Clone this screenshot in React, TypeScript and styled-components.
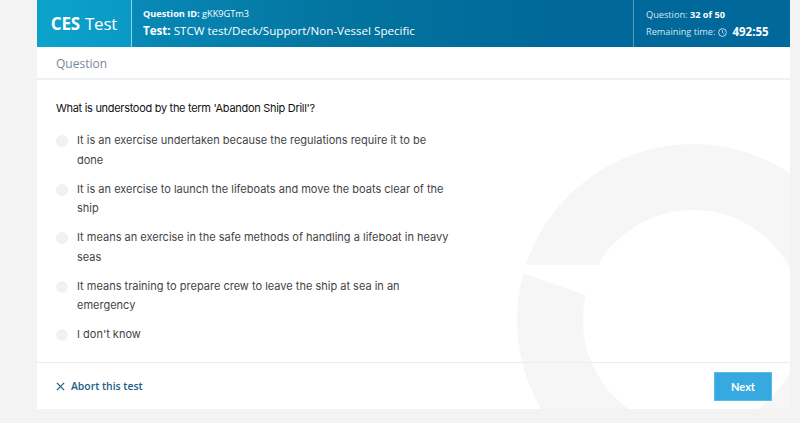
import styled, { createGlobalStyle } from "styled-components";

const Global = createGlobalStyle`
  html, body {
    margin: 0;
    padding: 0;
    background: #f3f3f3;
  }
  * { box-sizing: border-box; }
`;

const Page = styled.div`
  width: 800px;
  height: 423px;
  padding: 0 10px 14px 37px;
  background: #f3f3f3;
`;

const Card = styled.div`
  position: relative;
  overflow: hidden;
  height: 409px;
  background: #fff;
  display: flex;
  flex-direction: column;
`;

const Header = styled.header`
  position: relative;
  z-index: 1;
  display: flex;
  height: 47px;
  color: #fff;
  font-family: "Open Sans", "DejaVu Sans", sans-serif;
  background: linear-gradient(90deg, #0a93c2 0%, #03749f 40%, #00689a 70%, #00689a 100%);
`;

const Brand = styled.div`
  width: 95px;
  display: flex;
  align-items: center;
  justify-content: center;
  font-size: 17px;
  letter-spacing: -0.2px;
  background: linear-gradient(90deg, #0ba3cb, #0a99c5);
  border-right: 1px solid rgba(255, 255, 255, 0.55);
  b { font-weight: 700; margin-right: 5px; }
`;

const Info = styled.div`
  flex: 1;
  padding: 8px 0 0 11px;
  display: flex;
  flex-direction: column;
  gap: 3px;
`;

const Small = styled.div`
  font-size: 9.2px;
  line-height: 12px;
  b { font-weight: 700; }
`;

const Medium = styled.div`
  font-size: 11.6px;
  line-height: 16px;
  b { font-weight: 700; }
`;

const Status = styled.div`
  width: 157px;
  padding: 8px 0 0 12px;
  border-left: 1px solid rgba(255, 255, 255, 0.35);
  display: flex;
  flex-direction: column;
  gap: 3px;
  font-size: 9.2px;
  color: #d6e6f0;
  b { color: #fff; font-weight: 700; }
`;

const TimeRow = styled.div`
  display: flex;
  align-items: center;
  gap: 3px;
  line-height: 16px;
  strong {
    color: #fff;
    font-size: 11.5px;
    font-weight: 700;
    margin-left: 2px;
  }
`;

const Tab = styled.div`
  position: relative;
  z-index: 1;
  height: 33px;
  padding: 8px 0 0 19px;
  font-family: "Open Sans", "DejaVu Sans", sans-serif;
  font-size: 12px;
  color: #7b8998;
  border-bottom: 2px solid #eef1f4;
`;

const Body = styled.div`
  position: relative;
  z-index: 1;
  flex: 1;
  padding: 19px 0 0 19px;
  font-family: Inter, "Noto Sans", sans-serif;
`;

const QuestionText = styled.p`
  margin: 0 0 14px;
  font-size: 11px;
  font-weight: 400;
  letter-spacing: -0.3px;
  line-height: 18px;
  color: #111;
`;

const Options = styled.div`
  display: flex;
  flex-direction: column;
  gap: 9.5px;
`;

const Option = styled.label`
  display: flex;
  align-items: flex-start;
  gap: 9px;
  width: 394px;
  font-size: 11px;
  line-height: 19.5px;
  color: #444;
`;

const Radio = styled.span`
  flex: none;
  width: 12px;
  height: 12px;
  margin-top: 4px;
  border-radius: 50%;
  background: #eef1f5;
`;

const Footer = styled.footer`
  position: relative;
  z-index: 1;
  height: 47px;
  border-top: 1px solid #e8eef3;
  display: flex;
  align-items: center;
  justify-content: space-between;
  padding: 0 18px 0 19px;
`;

const Abort = styled.a`
  display: flex;
  align-items: center;
  gap: 6px;
  font-family: "Open Sans", "DejaVu Sans", sans-serif;
  font-size: 10.4px;
  font-weight: 600;
  color: #1b5d86;
`;

const NextButton = styled.button`
  width: 58px;
  height: 29px;
  border: 1px solid #5cbbe6;
  background: #36a9e1;
  color: #fff;
  font-family: Lato, "Open Sans", sans-serif;
  font-size: 11px;
  font-weight: 700;
`;

const Watermark = styled.svg`
  position: absolute;
  left: 0;
  top: 0;
  z-index: 0;
`;

const options = [
  "It is an exercise undertaken because the regulations require it to be done",
  "It is an exercise to launch the lifeboats and move the boats clear of the ship",
  "It means an exercise in the safe methods of handling a lifeboat in heavy seas",
  "It means training to prepare crew to leave the ship at sea in an emergency",
  "I don't know",
];

export default function App() {
  return (
    <>
      <Global />
      <Page>
        <Card>
          <Watermark width="753" height="409" viewBox="37 0 753 409">
            <path
              fillRule="evenodd"
              fill="#f6f6f6"
              d="M693 144a176 176 0 1 1 0 352a176 176 0 1 1 0-352zM693 210a110 110 0 1 0 0 220a110 110 0 1 0 0-220z"
            />
            <path fill="#fff" d="M500 265 L608 265 L598 305 Q594 295 585 295 L522 273 L500 273 Z" />
          </Watermark>
          <Header>
            <Brand>
              <b>CES</b>Test
            </Brand>
            <Info>
              <Small>
                <b>Question ID:</b> gKK9GTm3
              </Small>
              <Medium>
                <b>Test:</b> STCW test/Deck/Support/Non-Vessel Specific
              </Medium>
            </Info>
            <Status>
              <div>
                Question: <b>32 of 50</b>
              </div>
              <TimeRow>
                Remaining time:
                <svg width="9" height="9" viewBox="0 0 10 10" fill="none" stroke="#d6e6f0" strokeWidth="1">
                  <circle cx="5" cy="5" r="4.3" />
                  <path d="M5 2.5V5l1.6 1.4" />
                </svg>
                <strong>492:55</strong>
              </TimeRow>
            </Status>
          </Header>
          <Tab>Question</Tab>
          <Body>
            <QuestionText>What is understood by the term 'Abandon Ship Drill'?</QuestionText>
            <Options>
              {options.map((o) => (
                <Option key={o}>
                  <Radio />
                  <span>{o}</span>
                </Option>
              ))}
            </Options>
          </Body>
          <Footer>
            <Abort>
              <svg width="9" height="9" viewBox="0 0 10 10" stroke="#1b5d86" strokeWidth="1.4">
                <path d="M1 1l8 8M9 1l-8 8" />
              </svg>
              Abort this test
            </Abort>
            <NextButton>Next</NextButton>
          </Footer>
        </Card>
      </Page>
    </>
  );
}
